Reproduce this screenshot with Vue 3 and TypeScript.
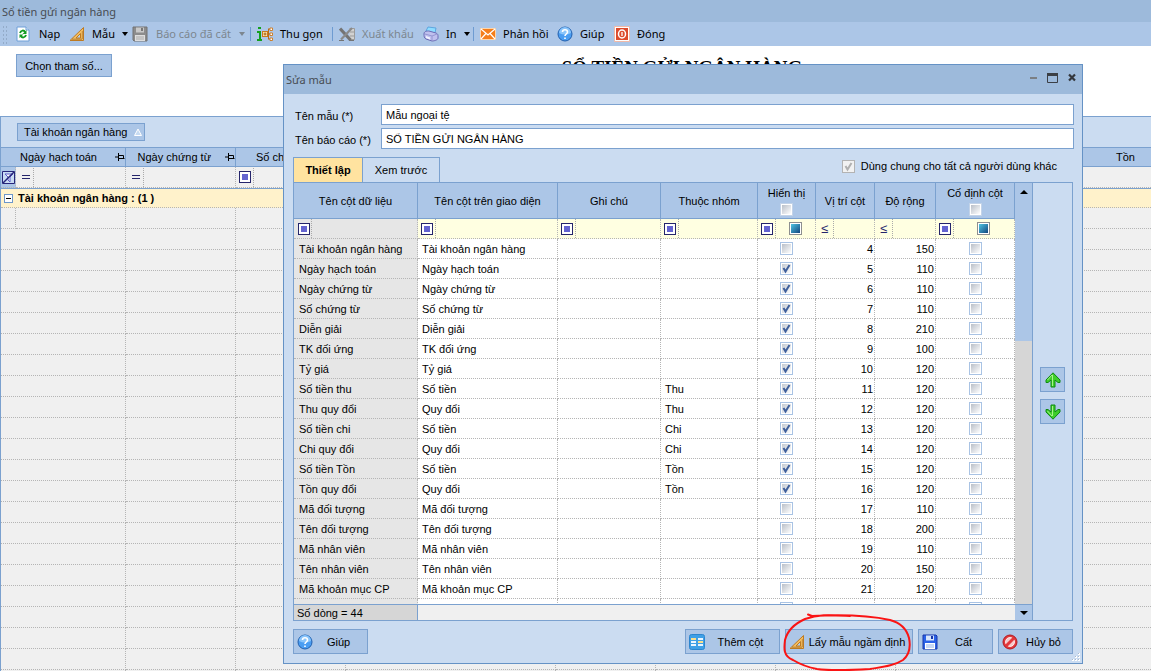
<script setup lang="ts">
import { ref } from 'vue'

interface ColumnRow {
  name: string
  caption: string
  group?: string
  visible: boolean
  position: number | ''
  width: number | ''
  pinned: boolean
}

const row = (
  name: string,
  caption: string,
  visible: boolean,
  position: number | '',
  width: number | '',
  group = '',
): ColumnRow => ({ name, caption, group, visible, position, width, pinned: false })

const rows = ref<ColumnRow[]>([
  row('Tài khoản ngân hàng', 'Tài khoản ngân hàng', false, 4, 150),
  row('Ngày hạch toán', 'Ngày hạch toán', true, 5, 110),
  row('Ngày chứng từ', 'Ngày chứng từ', true, 6, 110),
  row('Số chứng từ', 'Số chứng từ', true, 7, 110),
  row('Diễn giải', 'Diễn giải', true, 8, 210),
  row('TK đối ứng', 'TK đối ứng', true, 9, 100),
  row('Tỷ giá', 'Tỷ giá', true, 10, 120),
  row('Số tiền thu', 'Số tiền', true, 11, 120, 'Thu'),
  row('Thu quy đổi', 'Quy đổi', true, 12, 120, 'Thu'),
  row('Số tiền chi', 'Số tiền', true, 13, 120, 'Chi'),
  row('Chi quy đổi', 'Quy đổi', true, 14, 120, 'Chi'),
  row('Số tiền Tồn', 'Số tiền', true, 15, 120, 'Tồn'),
  row('Tồn quy đổi', 'Quy đổi', true, 16, 120, 'Tồn'),
  row('Mã đối tượng', 'Mã đối tượng', false, 17, 110),
  row('Tên đối tượng', 'Tên đối tượng', false, 18, 200),
  row('Mã nhân viên', 'Mã nhân viên', false, 19, 110),
  row('Tên nhân viên', 'Tên nhân viên', false, 20, 150),
  row('Mã khoản mục CP', 'Mã khoản mục CP', false, 21, 120),
  row('', '', false, '', ''),
])

const templateName = ref('Mẫu ngoại tệ')
const reportName = ref('SỔ TIỀN GỬI NGÂN HÀNG')
const emptyRows = 22
</script>

<template>
  <div class="page">
    <header class="titlebar">Sổ tiền gửi ngân hàng</header>

    <nav class="toolbar" aria-label="Thanh công cụ">
      <span class="grip"></span>
      <button class="tool nap">
        <svg class="ico" viewBox="0 0 16 16"><path d="M2 1h9l3 3v11H2z" fill="#fff" stroke="#6f9fd8" /><path d="M11 1v3h3" fill="#dceafa" stroke="#6f9fd8" /><path d="M5 7c1-3 4-3 5-1M11 9c-1 3-4 3-5 1" fill="none" stroke="#119c22" stroke-width="2" /><path d="M11.500 4v4h-4zM4.500 12V8.500h4z" fill="#119c22" /></svg>
        <span>Nạp</span>
      </button>
      <button class="tool mau">
        <svg class="ico" viewBox="0 0 16 16"><path d="M14.500 1.500v13H1z" fill="#f3bd60" stroke="#bd7a22" /><path d="M11.500 7.500v4.500H7z" fill="#b5cfec" stroke="#bd7a22" /><path d="M4 14v-1.500M6 14v-1.500M8 14v-1.500M10 14v-1.500M12 14v-1.500M14 12h-1.200M14 10h-1.200M14 8h-1.200M14 6h-1.200" stroke="#8a5412" stroke-width=".8" /></svg>
        <span>Mẫu</span><i class="caret"></i>
      </button>
      <button class="tool saved" disabled>
        <svg class="ico" viewBox="0 0 16 16"><path d="M1 1h14v14H2l-1-1z" fill="#8c8c8c" stroke="#737373" /><path d="M4 1.500h8v5H4z" fill="#c9c9c9" /><path d="M9 2h2v3H9z" fill="#777" /><path d="M3 9h10v6H3z" fill="#dedede" /><path d="M4 11h8M4 13h8" stroke="#aaa" /></svg>
        <span>Báo cáo đã cất</span><i class="caret"></i>
      </button>
      <span class="sep"></span>
      <button class="tool thugon">
        <svg class="ico" viewBox="0 0 16 16"><path d="M1 2h3M0 6h3v8M0 14h5" fill="none" stroke="#14a01e" stroke-width="2" /><path d="M8 8h5M11.500 3v10M11 3h2M11 13h2" fill="none" stroke="#b86a18" /><rect x="5.500" y="5.500" width="5" height="5" fill="#fbe3a4" stroke="#c9771c" /><path d="M6.500 8h3M8 6.500v3" stroke="#a85a10" /><path d="M13 2h2.500v2.500H13zM13 7h2.500v2.500H13zM13 12h2.500v2.500H13z" fill="#fff" stroke="#c9771c" stroke-width=".9" /></svg>
        <span>Thu gọn</span>
      </button>
      <span class="sep"></span>
      <button class="tool xuat" disabled>
        <svg class="ico" viewBox="0 0 16 16"><path d="M10.500 2.500h5v11h-5" fill="#d2d2d2" stroke="#9b9b9b" /><path d="M11 6h4M11 10h4" stroke="#9b9b9b" /><path d="M1 2.500l10.500 11.500" fill="none" stroke="#747474" stroke-width="3.200" /><path d="M13 2L2 13.500" fill="none" stroke="#8a8a8a" stroke-width="2.200" /><path d="M0 14.500h5M10 14.500h5" stroke="#747474" /></svg>
        <span>Xuất khẩu</span>
      </button>
      <button class="tool in">
        <svg class="ico" viewBox="0 0 16 16"><path d="M3 5l2-4 8 1-1 5z" fill="#8fdcff" stroke="#4d9bd9" stroke-width=".8" /><path d="M1 8c0-3 3-3 5-3l7 2c2 1 2 2 2 3v2c0 2-4 3-6 3l-6-2c-2-1-2-3-2-5z" fill="#bfc0ee" stroke="#6b6bb5" /><path d="M2 8l7 2 5-2M9 10v4" fill="none" stroke="#9596d2" /><path d="M3 10l4 1.500v2L3 12z" fill="#f2f2ff" /></svg>
        <span>In</span><i class="caret"></i>
      </button>
      <span class="sep"></span>
      <button class="tool phanhoi">
        <svg class="ico" viewBox="0 0 16 16"><path d="M.5 2.500h15v11H.5z" fill="#f57e1b" stroke="#fbd5ac" /><path d="M1 3l7 6 7-6M1 13l5-5.500M15 13l-5-5.500" fill="none" stroke="#fff" stroke-width="1.200" /></svg>
        <span>Phản hồi</span>
      </button>
      <button class="tool giup">
        <svg class="ico" viewBox="0 0 16 16"><circle cx="8" cy="8" r="7" fill="#4a9df2" stroke="#2360ad" /><path d="M2 7a6 6 0 0 1 12 0c-4 2-8 2-12 0z" fill="#8ac5fb" /><path d="M5.500 6c0-3 5-3 5 0 0 2-2.500 2-2.500 4M8 11.500V13" fill="none" stroke="#fff" stroke-width="1.600" /></svg>
        <span>Giúp</span>
      </button>
      <button class="tool">
        <svg class="ico" viewBox="0 0 16 16"><path d="M.5.500h15v15H.5z" fill="#fff" stroke="#f1b9a8" /><path d="M2 2h12v12H2z" fill="#dd4a2c" /><ellipse cx="8" cy="8" rx="3.500" ry="4" fill="none" stroke="#fff" stroke-width="1.500" /><path d="M8 6v4" stroke="#fff" stroke-width="1.300" /></svg>
        <span>Đóng</span>
      </button>
    </nav>

    <section class="report-head">
      <div class="params"><button class="btn param-btn">Chọn tham số...</button></div>
      <h1>SỔ TIỀN GỬI NGÂN HÀNG</h1>
    </section>

    <main class="report">
      <div class="group-by">
        <button class="group-chip">
          <span>Tài khoản ngân hàng</span>
          <svg width="10" height="9" viewBox="0 0 10 9"><path d="M5 1L1.500 7.500h7z" fill="#c7dbf2" stroke="#fff" /></svg>
        </button>
      </div>
      <table class="report-table">
        <colgroup>
          <col class="r-sel" /><col class="r-110" /><col class="r-110" /><col class="r-110" />
          <col class="r-210" /><col class="r-100" /><col class="r-120" /><col class="r-120" /><col />
        </colgroup>
        <thead>
          <tr>
            <th colspan="2" class="first">
              <div class="pin-head"><span>Ngày hạch toán</span><svg width="10" height="8" viewBox="0 0 10 8"><path d="M0 4h3M3.500 0v8M3.500 2.500h5v3M3.500 5.500h6" fill="none" stroke="#000" /></svg></div>
            </th>
            <th>
              <div class="pin-head"><span>Ngày chứng từ</span><svg width="10" height="8" viewBox="0 0 10 8"><path d="M0 4h3M3.500 0v8M3.500 2.500h5v3M3.500 5.500h6" fill="none" stroke="#000" /></svg></div>
            </th>
            <th><div class="pin-head left"><span>Số chứng từ</span></div></th>
            <th></th><th></th><th></th><th></th>
            <th class="last">Tồn</th>
          </tr>
        </thead>
        <tbody>
          <tr class="r-filter">
            <td class="funnel"><svg width="13" height="13" viewBox="0 0 13 13"><path d="M.5.500h12v12H.5z" fill="#c9dbf3" stroke="#26267a" /><path d="M3 3h8L8 6v5L6 9V6z" fill="#fff" stroke="#5a5ac6" /><path d="M1 12L12 1" stroke="#26267a" stroke-width="1.500" /></svg></td>
            <td><div class="op"><span class="eq"></span></div></td>
            <td><div class="op"><span class="eq"></span></div></td>
            <td><div class="op"><span class="box"></span></div></td>
            <td></td><td></td><td></td><td></td><td></td>
          </tr>
          <tr class="r-group">
            <td colspan="9"><div><button class="minus" aria-label="Thu gọn nhóm"></button><b>Tài khoản ngân hàng : (1 )</b></div></td>
          </tr>
          <tr class="r-first"><td v-for="n in 9" :key="n"></td></tr>
          <tr v-for="r in emptyRows" :key="r" class="r-empty">
            <td colspan="2"></td><td v-for="n in 7" :key="n"></td>
          </tr>
        </tbody>
      </table>
    </main>

    <div class="dialog" role="dialog" aria-labelledby="dlg-title">
      <div class="dlg-title">
        <span id="dlg-title">Sửa mẫu</span>
        <div class="win-btns">
          <button aria-label="Thu nhỏ"><svg width="8" height="12" viewBox="0 0 8 12"><path d="M0 6h7" stroke="#7b7f84" stroke-width="2" /></svg></button>
          <button aria-label="Phóng to"><svg width="12" height="12" viewBox="0 0 12 12"><path d="M.5 1.500h10v9H.5z" fill="none" stroke="#3b3f45" /><path d="M0 2.500h11" stroke="#3b3f45" stroke-width="3" /></svg></button>
          <button aria-label="Đóng cửa sổ"><svg width="8" height="12" viewBox="0 0 8 12"><path d="M1 2.500l6 6M7 2.500l-6 6" stroke="#33373d" stroke-width="2.200" /></svg></button>
        </div>
      </div>

      <div class="dlg-body">
        <div class="fields">
          <label for="tpl">Tên mẫu (*)</label><input id="tpl" v-model="templateName" type="text" />
          <label for="rpt">Tên báo cáo (*)</label><input id="rpt" v-model="reportName" type="text" />
        </div>

        <div class="tab-row">
          <div class="tabs" role="tablist">
            <button class="tab active" role="tab" aria-selected="true">Thiết lập</button>
            <button class="tab" role="tab" aria-selected="false">Xem trước</button>
          </div>
          <label class="share"><input type="checkbox" class="chk off" checked disabled /><span>Dùng chung cho tất cả người dùng khác</span></label>
        </div>

        <div class="pane">
          <div class="grid">
            <div class="viewport">
              <table class="cols">
                <colgroup>
                  <col class="c1" /><col class="c2" /><col class="c3" /><col class="c4" />
                  <col class="c5" /><col class="c6" /><col class="c7" /><col class="c8" />
                </colgroup>
                <thead>
                  <tr>
                    <th>Tên cột dữ liệu</th>
                    <th>Tên cột trên giao diện</th>
                    <th>Ghi chú</th>
                    <th>Thuộc nhóm</th>
                    <th><label class="head-chk">Hiển thị<input type="checkbox" class="chk pale" /></label></th>
                    <th>Vị trí cột</th>
                    <th>Độ rộng</th>
                    <th><label class="head-chk">Cố định cột<input type="checkbox" class="chk pale" /></label></th>
                  </tr>
                </thead>
                <tbody>
                  <tr class="filter">
                    <td class="key"><div class="op"><span class="box"></span></div></td>
                    <td><div class="op"><span class="box"></span></div></td>
                    <td><div class="op"><span class="box"></span></div></td>
                    <td><div class="op"><span class="box"></span></div></td>
                    <td><div class="op"><span class="box"></span><input type="checkbox" class="chk mixed" aria-label="Lọc hiển thị" /></div></td>
                    <td><div class="op"><span class="le">≤</span></div></td>
                    <td><div class="op"><span class="le">≤</span></div></td>
                    <td><div class="op wide"><span class="box"></span><input type="checkbox" class="chk mixed" aria-label="Lọc cố định cột" /></div></td>
                  </tr>
                  <tr v-for="(r, i) in rows" :key="i">
                    <td class="key">{{ r.name }}</td>
                    <td>{{ r.caption }}</td>
                    <td></td>
                    <td>{{ r.group }}</td>
                    <td class="mid"><input v-model="r.visible" type="checkbox" class="chk" :aria-label="'Hiển thị ' + r.name" /></td>
                    <td class="num">{{ r.position }}</td>
                    <td class="num">{{ r.width }}</td>
                    <td class="mid"><input v-model="r.pinned" type="checkbox" class="chk" :aria-label="'Cố định ' + r.name" /></td>
                  </tr>
                </tbody>
              </table>
            </div>
            <div class="summary"><span>Số dòng = 44</span><span></span></div>
          </div>
          <div class="scroll">
            <button class="sb" aria-label="Cuộn lên"><svg width="8" height="4" viewBox="0 0 8 4"><path d="M4 0l4 4H0z" /></svg></button>
            <div class="thumb"></div>
            <div class="track"></div>
            <button class="sb down" aria-label="Cuộn xuống"><svg width="8" height="4" viewBox="0 0 8 4"><path d="M0 0h8L4 4z" /></svg></button>
          </div>
          <div class="side">
            <button class="move" aria-label="Lên"><svg width="16" height="16" viewBox="0 0 16 16"><path d="M8 .8L15 8v2.500h-2L10 8v7H6V8l-3 2.500H1V8z" fill="#3fce2a" stroke="#0f8a12" /><path d="M7.500 3v11M7 3L2.500 8" fill="none" stroke="#a8f28c" /></svg></button>
            <button class="move" aria-label="Xuống"><svg width="16" height="16" viewBox="0 0 16 16"><path d="M8 15.200L15 8V5.500h-2L10 8V1H6v7L3 5.500H1V8z" fill="#3fce2a" stroke="#0f8a12" /><path d="M7.500 2v10M2.500 7L7 12" fill="none" stroke="#a8f28c" /></svg></button>
          </div>
        </div>

        <footer class="actions">
          <button class="btn act short help">
            <svg class="ico" viewBox="0 0 16 16"><circle cx="8" cy="8" r="7" fill="#4a9df2" stroke="#2360ad" /><path d="M2 7a6 6 0 0 1 12 0c-4 2-8 2-12 0z" fill="#8ac5fb" /><path d="M5.500 6c0-3 5-3 5 0 0 2-2.500 2-2.500 4M8 11.500V13" fill="none" stroke="#fff" stroke-width="1.600" /></svg>
            <span>Giúp</span>
          </button>
          <button class="btn act add">
            <svg class="ico" viewBox="0 0 16 16"><rect x=".5" y=".5" width="15" height="15" rx="2" fill="#3fa0e6" stroke="#2d86cf" /><path d="M2 4h5v2H2zM2 7h5v2H2zM2 10h5v2H2zM9 4h5v2H9zM9 10h5v2H9z" fill="#e9f5ff" /><path d="M2 4h5v2H2zM9 7h5v2H9z" fill="#fbdf8c" /></svg>
            <span>Thêm cột</span>
          </button>
          <div class="marked">
            <button class="btn act default">
              <svg class="ico" viewBox="0 0 16 16"><path d="M14.500 1.500v13H1z" fill="#f3bd60" stroke="#bd7a22" /><path d="M11.500 7.500v4.500H7z" fill="#b5cfec" stroke="#bd7a22" /><path d="M4 14v-1.500M6 14v-1.500M8 14v-1.500M10 14v-1.500M12 14v-1.500M14 12h-1.200M14 10h-1.200M14 8h-1.200M14 6h-1.200" stroke="#8a5412" stroke-width=".8" /></svg>
              <span>Lấy mẫu ngầm định</span>
            </button>
            <svg class="ring" width="132" height="60" viewBox="0 0 132 60"><path d="M26 2.500L30 4C50 3 85 3 108 8C119 11 125 18 127 26C129 36 127 43 121 48C112 54 100 55 88 57C70 58 50 59 35 57C24 55 16 51 11 48C1 44 2 36 3 28C5 20 12 12 23 7C37 2 48 3 68 4" fill="none" stroke="#fa1414" stroke-width="2" stroke-linecap="round" /></svg>
          </div>
          <button class="btn act short">
            <svg class="ico" viewBox="0 0 16 16"><path d="M1 1h13l1 1v13H1z" fill="#2b62e8" stroke="#1837a8" /><path d="M4 1.500h8v5H4z" fill="#d9e6fb" /><path d="M9 2h2v3H9z" fill="#1837a8" /><path d="M3 9h10v6H3z" fill="#fff" /><path d="M4 11h8M4 13h8" stroke="#8fb0ea" /></svg>
            <span>Cất</span>
          </button>
          <button class="btn act short">
            <svg class="ico" viewBox="0 0 16 16"><circle cx="8" cy="8" r="7" fill="#e2383b" stroke="#b01c22" /><circle cx="8" cy="8" r="4.500" fill="#f6c9ca" stroke="#fff" stroke-width=".8" /><path d="M4 12l8-8" stroke="#e2383b" stroke-width="3" /></svg>
            <span>Hủy bỏ</span>
          </button>
        </footer>
      </div>
      <svg class="resize" width="9" height="9" viewBox="0 0 9 9"><path d="M6 0h2v2H6zM3 3h2v2H3zM6 3h2v2H6zM0 6h2v2H0zM3 6h2v2H3zM6 6h2v2H6z" fill="#fff" /><path d="M6 0h1v1H6zM3 3h1v1H3zM6 3h1v1H6zM0 6h1v1H0zM3 6h1v1H3zM6 6h1v1H6z" fill="#a9b9cc" /></svg>
    </div>
  </div>
</template>

<style>
body {
  margin: 0;
}
</style>

<style scoped>
* {
  box-sizing: border-box;
}
.page {
  position: relative;
  display: flex;
  flex-direction: column;
  height: 100vh;
  overflow: hidden;
  background: #fff;
  color: #000;
  font: 11px/16px 'Liberation Sans', Arial, sans-serif;
}
button {
  margin: 0;
  padding: 0;
  border: 0;
  background: none;
  color: inherit;
  font: inherit;
  white-space: nowrap;
}
.ico {
  flex: none;
  width: 16px;
  height: 16px;
}
.titlebar {
  flex: none;
  height: 22px;
  padding: 4px 2px 0;
  background: #9dbadb;
  color: #474c52;
  font: 11px/16px 'Noto Sans', sans-serif;
}
.toolbar {
  flex: none;
  display: flex;
  align-items: center;
  height: 24px;
  background: #acc6e7;
}
.tool {
  flex: none;
  display: flex;
  align-items: center;
  gap: 7px;
  font: 11px/16px 'Noto Sans', sans-serif;
}
.tool:disabled {
  color: #7c868f;
}
.grip {
  width: 6px;
  height: 19px;
  margin: 0 7px 0 2px;
  background: radial-gradient(#93abc9 1px, transparent 1px) 0 0 / 3px 4px;
}
.nap {
  width: 54px;
  gap: 8px;
}
.mau { width: 63px; }
.saved {
  width: 118px;
  gap: 8px;
}
.thugon { width: 75px; margin-left: 6px; }
.xuat { width: 84px; margin-left: 6px; }
.in { width: 50px; }
.phanhoi { width: 77px; margin-left: 6px; }
.giup { width: 57px; }
.caret {
  border: 3px solid transparent;
  border-top: 4px solid currentColor;
  border-bottom: 0;
}
.sep {
  flex: none;
  width: 1px;
  height: 14px;
  background: #6e9bd1;
}

.report-head {
  flex: none;
  display: flex;
  height: 70px;
  padding-top: 8px;
}
.params {
  flex: none;
  width: 213px;
  padding-left: 16px;
}
.btn {
  border: 1px solid #7ba1cf;
  background: #acc6e7;
}
.param-btn {
  width: 96px;
  height: 23px;
}
h1 {
  flex: 1;
  margin: 0;
  font: bold 19px/28px 'Liberation Serif', 'Times New Roman', serif;
  text-align: center;
}

.report {
  flex: 1;
  min-height: 0;
  overflow: hidden;
  border-top: 1px solid #7ba1cf;
  border-left: 1px solid #7ba1cf;
  background: #f0f0f0;
}
.group-by {
  height: 30px;
  padding: 6px 16px;
  background: #cbdcf1;
}
.group-chip {
  display: flex;
  align-items: center;
  justify-content: space-between;
  width: 128px;
  height: 18px;
  padding: 0 1px 0 6px;
  border: 1px solid #7ba1cf;
  background: #acc6e7;
}
table {
  width: 100%;
  border-collapse: separate;
  border-spacing: 0;
  table-layout: fixed;
}
th,
td {
  padding: 0;
  overflow: hidden;
  white-space: nowrap;
}
th {
  font-weight: normal;
}
.r-sel { width: 15px; }
.r-110 { width: 110px; }
.r-210 { width: 210px; }
.r-100 { width: 100px; }
.r-120 { width: 120px; }
.report-table th {
  height: 20px;
  border: 1px solid #7ba1cf;
  border-left: 0;
  background: #acc6e7;
}
.report-table th.last {
  padding-right: 16px;
  border-right: 0;
  text-align: right;
}
.pin-head {
  display: flex;
  align-items: center;
  justify-content: flex-end;
  gap: 18px;
}
.pin-head.left {
  justify-content: flex-start;
  padding-left: 20px;
}
th:nth-child(2) .pin-head {
  gap: 14px;
}
.report-table td {
  border-right: 1px dotted #b5b5b5;
  border-bottom: 1px dotted #b5b5b5;
}
.report-table td:last-child {
  border-right: 0;
}
.report-table .r-filter td {
  height: 21px;
}
.report-table td.funnel {
  padding-left: 1px;
  background: #acc6e7;
  line-height: 0;
}
.report-table .r-group td {
  height: 20px;
  border-top: 1px solid #7ba1cf;
  background: #fff2cb;
}
.r-group div {
  display: flex;
  align-items: center;
  gap: 5px;
  padding-left: 3px;
}
.minus {
  width: 9px;
  height: 9px;
  border: 1px solid #6d97c9;
  background: linear-gradient(#000, #000) center / 5px 1px no-repeat #fff;
}
.r-first td {
  height: 21px;
}
.report-table .r-empty td {
  height: 21px;
}

.op {
  display: flex;
  align-items: center;
  width: 18px;
  height: 19px;
  padding-left: 3px;
  border-right: 1px dotted #aaa;
}
.key .op {
  padding-left: 4px;
}
.box {
  flex: none;
  width: 12px;
  height: 12px;
  border: 1px solid #25256b;
  background: linear-gradient(#6464d0, #6464d0) center / 6px 6px no-repeat #fff;
}
.eq {
  width: 8px;
  height: 4px;
  margin-left: 3px;
  border: solid #25256b;
  border-width: 1px 0;
}
.le {
  padding-left: 2px;
  color: #25256b;
  font-size: 13px;
}

.dialog {
  position: absolute;
  top: 64px;
  left: 283px;
  right: 68px;
  border: 1px solid #6592c5;
  background: #cbdcf1;
}
.dlg-title {
  display: flex;
  justify-content: space-between;
  height: 29px;
  padding: 7px 6px 0 2px;
  background: #9dbadb;
  color: #474c52;
  font: 11px/16px 'Noto Sans', sans-serif;
}
.win-btns {
  display: flex;
  gap: 9px;
  height: 12px;
}
.win-btns button {
  display: flex;
}
.dlg-body {
  padding: 10px 9px 9px;
}
.fields {
  display: grid;
  grid-template-columns: 85px 1fr;
  row-gap: 3px;
  column-gap: 1px;
  padding-left: 2px;
  margin-right: -1px;
  align-items: center;
}
.fields label {
  padding-top: 3px;
}
.fields input {
  width: 100%;
  height: 21px;
  padding: 0 4px;
  border: 1px solid #7ba1cf;
  background: #fff;
  color: #000;
  font: inherit;
}
.tab-row {
  display: flex;
  justify-content: space-between;
  margin-top: 8px;
}
.tabs {
  display: flex;
}
.tab {
  height: 25px;
  width: 77px;
  border: 1px solid #7ba1cf;
  border-bottom: 0;
  border-left: 0;
}
.tab.active {
  width: 70px;
  border-left: 1px solid #7ba1cf;
  background: #ffe3a0;
  font-weight: bold;
}
.share {
  display: flex;
  align-items: center;
  gap: 6px;
  height: 18px;
  padding-right: 16px;
}
.chk {
  appearance: none;
  flex: none;
  display: block;
  width: 13px;
  height: 13px;
  margin: 0;
  border: 1px solid #a9c3e4;
  background: linear-gradient(135deg, #b9bfc8, #fff) center / 9px 9px no-repeat #fff;
}
.chk:checked {
  background:
    url("data:image/svg+xml,%3Csvg xmlns='http://www.w3.org/2000/svg' viewBox='0 0 11 11'%3E%3Cpath d='M2.500 5l2 3.500L8.500 2' fill='none' stroke='%2340609c' stroke-width='2'/%3E%3C/svg%3E") center / 11px 11px no-repeat,
    linear-gradient(135deg, #c3c9d1, #fff) center / 9px 9px no-repeat #fff;
}
.chk.pale {
  border-color: #c3d3e8;
}
.chk.mixed {
  border-color: #8d8f8f;
  background: linear-gradient(135deg, #4fc5e2, #12457e) center / 9px 9px no-repeat #fff;
}
.chk.off {
  border-color: #b3b3b3;
  background:
    url("data:image/svg+xml,%3Csvg xmlns='http://www.w3.org/2000/svg' viewBox='0 0 11 11'%3E%3Cpath d='M2.500 5l2 3.500L8.500 2' fill='none' stroke='%23b0b0b0' stroke-width='2'/%3E%3C/svg%3E") center / 11px 11px no-repeat,
    #f2f2f2;
}

.pane {
  display: flex;
  border: 1px solid #7ba1cf;
}
.grid {
  flex: 1;
  min-width: 0;
}
.viewport {
  height: 421px;
  overflow: hidden;
  background: #fff;
}
.c1 { width: 124px; }
.c2 { width: 140px; }
.c3 { width: 103px; }
.c4 { width: 97px; }
.c5 { width: 58px; }
.c6 { width: 59px; }
.c7 { width: 61px; }
.c8 { width: 79px; }
.cols th {
  height: 36px;
  border-right: 1px solid #7ba1cf;
  border-bottom: 1px solid #7ba1cf;
  background: #acc6e7;
}
.head-chk {
  display: flex;
  flex-direction: column;
  align-items: center;
  gap: 1px;
  line-height: 17px;
}
.cols td {
  height: 20px;
  padding: 0 4px;
  border-right: 1px dotted #b5b5b5;
  border-bottom: 1px dotted #b5b5b5;
}
.cols td.key {
  padding-left: 5px;
  background: #e6e6e6;
}
.cols .filter td {
  padding: 0;
  background: #ffffe1;
}
.cols .filter td.key {
  background: #e6e6e6;
}
.filter .chk {
  margin-left: 16px;
}
.filter .wide .chk {
  margin-left: 26px;
}
.cols td.num {
  padding: 0 1px;
  text-align: right;
}
.mid .chk {
  margin: 0 auto;
}
.summary {
  display: grid;
  grid-template-columns: 124px 1fr;
  height: 16px;
  border-top: 1px solid #7ba1cf;
  background: #f0f0f0;
}
.summary span {
  height: 15px;
}
.summary span:first-child {
  padding-left: 3px;
  border-right: 1px solid #7ba1cf;
  background: #d6d6d6;
}
.scroll {
  flex: none;
  display: flex;
  flex-direction: column;
  width: 18px;
  border-right: 1px solid #7ba1cf;
}
.sb {
  display: flex;
  align-items: center;
  justify-content: center;
  height: 17px;
  background: #acc6e7;
}
.sb.down {
  height: 16px;
  border-top: 1px solid #7ba1cf;
}
.thumb {
  height: 141px;
  background: #acc6e7;
}
.track {
  flex: 1;
  background: #d6d6d6;
}
.side {
  flex: none;
  display: flex;
  flex-direction: column;
  justify-content: center;
  align-items: center;
  gap: 7px;
  width: 39px;
  padding-bottom: 12px;
}
.move {
  display: flex;
  align-items: center;
  justify-content: center;
  width: 25px;
  height: 25px;
  border: 1px solid #7ba1cf;
  background: #acc6e7;
}
.actions {
  display: flex;
  gap: 5px;
  margin-top: 8px;
}
.act {
  display: flex;
  align-items: center;
  height: 25px;
  padding: 0 3px;
}
.act span {
  flex: 1;
}
.short { width: 75px; }
.add { width: 95px; }
.default { width: 128px; }
.help {
  margin-right: auto;
}
.marked {
  position: relative;
}
.ring {
  position: absolute;
  left: -3px;
  top: -17px;
  pointer-events: none;
}
.resize {
  position: absolute;
  right: 1px;
  bottom: 1px;
}
</style>
